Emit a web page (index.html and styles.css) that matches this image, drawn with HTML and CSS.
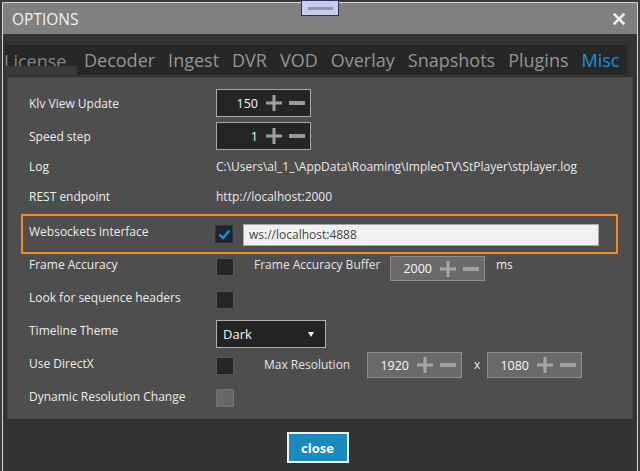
FILE: index.html
```html
<!DOCTYPE html>
<html>
<head>
<meta charset="utf-8">
<title>Options</title>
<link rel="stylesheet" href="styles.css">
</head>
<body>
<div class="window">
  <div class="grip"><span class="grip-bar"></span></div>
  <header class="titlebar">
    <span class="title">OPTIONS</span>
    <svg class="close-x" width="12" height="12" viewBox="0 0 12 12"><path d="M1.5 1.5L10.5 10.5M10.5 1.5L1.5 10.5" stroke="#eeeeee" stroke-width="2.6" stroke-linecap="square"/></svg>
  </header>
  <div class="body">
    <nav class="tabs">
      <span class="tab tab-license">License</span>
      <span class="tab">Decoder</span>
      <span class="tab">Ingest</span>
      <span class="tab">DVR</span>
      <span class="tab">VOD</span>
      <span class="tab">Overlay</span>
      <span class="tab">Snapshots</span>
      <span class="tab">Plugins</span>
      <span class="tab active">Misc</span>
    </nav>
    <section class="panel">
      <div class="row row-spin">
        <span class="label">Klv View Update</span>
        <div class="spin spin-dark">
          <span class="val">150</span>
          <svg class="plus" width="16" height="16" viewBox="0 0 16 16"><path d="M8 0V16M0 8H16" stroke="#a0a0a0" stroke-width="3"/></svg>
          <svg class="minus" width="16" height="16" viewBox="0 0 16 16"><path d="M0 8H16" stroke="#9a9a9a" stroke-width="4"/></svg>
        </div>
      </div>
      <div class="row row-spin row-gap">
        <span class="label">Speed step</span>
        <div class="spin spin-dark">
          <span class="val">1</span>
          <svg class="plus" width="16" height="16" viewBox="0 0 16 16"><path d="M8 0V16M0 8H16" stroke="#a0a0a0" stroke-width="3"/></svg>
          <svg class="minus" width="16" height="16" viewBox="0 0 16 16"><path d="M0 8H16" stroke="#9a9a9a" stroke-width="4"/></svg>
        </div>
      </div>
      <div class="row row-text row-log">
        <span class="label">Log</span>
        <span class="value">C:\Users\al_1_\AppData\Roaming\ImpleoTV\StPlayer\stplayer.log</span>
      </div>
      <div class="row row-text">
        <span class="label">REST endpoint</span>
        <span class="value">http://localhost:2000</span>
      </div>
      <div class="row highlight">
        <span class="label">Websockets interface</span>
        <span class="check checked">
          <svg width="13" height="11" viewBox="0 0 13 11"><path d="M1.5 5.5L5 9L11.5 1.5" fill="none" stroke="#1b8fd6" stroke-width="2.4"/></svg>
        </span>
        <span class="textbox">ws://localhost:4888</span>
      </div>
      <div class="row row-opt">
        <span class="label">Frame Accuracy</span>
        <span class="check"></span>
        <span class="sublabel sub-buffer">Frame Accuracy Buffer</span>
        <div class="spin spin-gray spin-buffer">
          <span class="val">2000</span>
          <svg class="plus" width="16" height="16" viewBox="0 0 16 16"><path d="M8 0V16M0 8H16" stroke="#a8a8a8" stroke-width="3"/></svg>
          <svg class="minus" width="16" height="16" viewBox="0 0 16 16"><path d="M0 8H16" stroke="#a0a0a0" stroke-width="4"/></svg>
        </div>
        <span class="unit">ms</span>
      </div>
      <div class="row row-opt">
        <span class="label">Look for sequence headers</span>
        <span class="check"></span>
      </div>
      <div class="row row-opt">
        <span class="label">Timeline Theme</span>
        <div class="select">
          <span>Dark</span>
          <span class="caret"></span>
        </div>
      </div>
      <div class="row row-opt">
        <span class="label">Use DirectX</span>
        <span class="check"></span>
        <span class="sublabel sub-res">Max Resolution</span>
        <div class="spin spin-gray spin-res">
          <span class="val">1920</span>
          <svg class="plus" width="16" height="16" viewBox="0 0 16 16"><path d="M8 0V16M0 8H16" stroke="#a8a8a8" stroke-width="3"/></svg>
          <svg class="minus" width="16" height="16" viewBox="0 0 16 16"><path d="M0 8H16" stroke="#a0a0a0" stroke-width="4"/></svg>
        </div>
        <span class="times">x</span>
        <div class="spin spin-gray spin-res">
          <span class="val">1080</span>
          <svg class="plus" width="16" height="16" viewBox="0 0 16 16"><path d="M8 0V16M0 8H16" stroke="#a8a8a8" stroke-width="3"/></svg>
          <svg class="minus" width="16" height="16" viewBox="0 0 16 16"><path d="M0 8H16" stroke="#a0a0a0" stroke-width="4"/></svg>
        </div>
      </div>
      <div class="row row-opt row-last">
        <span class="label">Dynamic Resolution Change</span>
        <span class="check disabled"></span>
      </div>
    </section>
    <footer class="actions">
      <button class="close-btn">close</button>
    </footer>
  </div>
</div>
</body>
</html>
```
FILE: styles.css
```css
html, body {
  margin: 0;
  height: 100%;
}
body {
  background: #3a3a3a;
  font-family: "Open Sans", "Noto Sans", sans-serif;
  overflow: hidden;
}
.window {
  position: relative;
  margin: 2px 0 0 2px;
  width: 634px;
  height: 469px;
  border: 1px solid #d6d6d6;
  border-bottom: none;
  background: #333333;
  box-sizing: content-box;
}
.grip {
  position: absolute;
  left: 298px;
  top: -3px;
  width: 36px;
  height: 14px;
  background: #c9cde9;
  border: 1px solid #2c3160;
  display: flex;
  justify-content: center;
  align-items: center;
}
.grip-bar {
  display: block;
  width: 25px;
  height: 3px;
  background: #8f94b8;
}
.titlebar {
  height: 31px;
  background: #808080;
  display: flex;
  align-items: center;
  justify-content: space-between;
  padding: 0 12px 0 9px;
}
.title {
  color: #f2f2f2;
  font-size: 15.5px;
  padding-top: 1px;
}
.body {
  padding-top: 11px;
}
.tabs {
  margin-left: 2px;
  width: 622px;
  height: 30px;
  background: #272727;
  display: flex;
  gap: 13px;
  overflow: hidden;
}
.tab {
  position: relative;
  font-size: 18px;
  line-height: 30px;
  color: #959595;
  white-space: nowrap;
}
.tab-license {
  color: #858585;
  margin-left: -1px;
  line-height: 28px;
  padding-top: 2px;
  width: 67px;
}
.tab-license::after {
  content: "";
  position: absolute;
  left: 0;
  top: 21px;
  width: 73px;
  height: 9px;
  background: #3a3a3a;
}
.tab.active {
  color: #1d8fd2;
}
.panel {
  margin: 2px 2px 0 4px;
  width: 626px;
  border: 1px solid #444444;
  background: #4e4e4e;
  padding: 11px 0 0 21px;
  box-sizing: border-box;
  height: 342px;
}
.row {
  display: flex;
  color: #ececec;
  font-size: 12px;
}
.label {
  flex: 0 0 187px;
  line-height: 20px;
  white-space: nowrap;
  padding-top: 1px;
}
.row-spin {
  height: 28px;
  align-items: center;
}
.row-gap {
  margin-top: 5px;
}
.row-text {
  height: 28px;
  align-items: center;
}
.row-text .value {
  padding-top: 1px;
}
.row-log {
  height: 32px;
}
.value {
  color: #e8e8e8;
  white-space: nowrap;
}
.spin {
  display: flex;
  align-items: center;
  box-sizing: border-box;
  width: 95px;
}
.spin .val {
  width: 41px;
  text-align: right;
  color: #f6f6f6;
  font-size: 12.5px;
}
.spin .plus {
  margin-left: 8px;
}
.spin .minus {
  margin-left: 7px;
}
.spin-dark {
  height: 28px;
  background: #252525;
  border: 1px solid #a8a8a8;
}
.spin-gray {
  height: 25px;
  background: #6a6a6a;
  border: 1px solid #8c8c8c;
}
.highlight {
  margin: 4px 0 0 -8px;
  width: 597px;
  height: 40px;
  box-sizing: border-box;
  border: 2px solid #f28b1e;
  padding-left: 6px;
  align-items: flex-start;
}
.highlight .label {
  margin-top: 5px;
}
.check {
  flex: 0 0 auto;
  width: 18px;
  height: 18px;
  box-sizing: border-box;
  background: #262626;
  border: 1px solid #555555;
  margin-top: 4px;
  display: flex;
  align-items: center;
  justify-content: center;
}
.highlight .check {
  margin-top: 9px;
  margin-left: -1px;
}
.check.checked {
  background: #1c2633;
  border-color: #2d3540;
}
.check.disabled {
  background: #676767;
  border-color: #727272;
  margin-top: 3px;
}
.textbox {
  margin: 8px 0 0 10px;
  width: 356px;
  height: 22px;
  box-sizing: border-box;
  background: #f1f1f1;
  border: 1px solid #a6a6a6;
  color: #454545;
  font-size: 12px;
  line-height: 20px;
  padding-left: 5px;
}
.row-opt {
  height: 33px;
  align-items: flex-start;
}
.sublabel {
  line-height: 20px;
  white-space: nowrap;
  color: #e4e4e4;
}
.sub-buffer {
  margin-left: 20px;
  width: 136px;
  padding-top: 1px;
}
.sub-res {
  margin: 2px 0 0 30px;
  width: 103px;
}
.spin-buffer {
  margin-top: 2px;
}
.spin-res {
  margin-top: -1px;
  height: 26px;
}
.unit {
  margin-left: 11px;
  line-height: 20px;
  padding-top: 1px;
}
.times {
  margin: 2px 6px 0 12px;
  line-height: 20px;
  width: 7px;
}
.select {
  width: 110px;
  height: 28px;
  box-sizing: border-box;
  background: #232323;
  border: 1px solid #b0b0b0;
  display: flex;
  align-items: center;
  justify-content: space-between;
  padding: 0 11px 0 6px;
  color: #f4f4f4;
  font-size: 13px;
}
.caret {
  width: 0;
  height: 0;
  border-left: 3.5px solid transparent;
  border-right: 3.5px solid transparent;
  border-top: 5px solid #f0f0f0;
}
.actions {
  display: flex;
  justify-content: center;
  padding: 13px 5px 0 0;
}
.close-btn {
  width: 62px;
  height: 31px;
  box-sizing: border-box;
  background: #1a8bc0;
  border: 2px solid #f2f2f2;
  color: #ffffff;
  font-family: "Open Sans", "Noto Sans", sans-serif;
  font-weight: bold;
  font-size: 13px;
  padding: 0;
}
```
